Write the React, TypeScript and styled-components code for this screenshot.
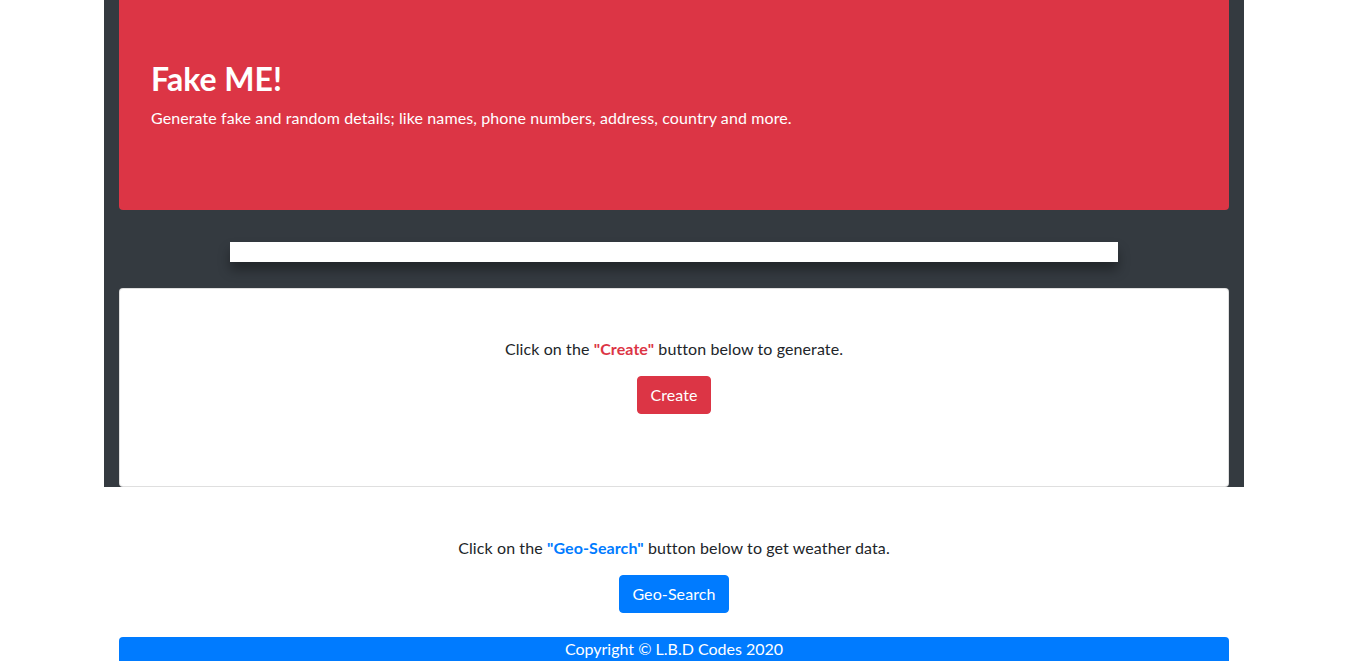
import React from "react";
import styled, { createGlobalStyle } from "styled-components";

const Global = createGlobalStyle`
  html, body { margin: 0; padding: 0; background: #fff; }
  body {
    padding-left: 3px;
    font-family: Lato, "Open Sans", "Liberation Sans", sans-serif;
    font-size: 16px;
    line-height: 1.5;
    letter-spacing: 0.1px;
    color: #212529;
  }
  * { box-sizing: border-box; }
`;

const Page = styled.div`
  width: 1140px;
  margin: 0 auto;
`;

const DarkSection = styled.section`
  background: #343a40;
  padding: 0 15px;
  height: 487px;
`;

const Jumbotron = styled.header`
  background: #dc3545;
  color: #fff;
  border-radius: 0 0 4px 4px;
  padding: 60px 32px 64px;
  margin-bottom: 32px;
`;

const Title = styled.h1`
  margin: 0 0 8px;
  font-size: 32px;
  font-weight: 700;
  line-height: 1.2;
  letter-spacing: 0;
`;

const Lead = styled.p`
  margin: 0 0 16px;
  font-size: 16px;
`;

const Bar = styled.div`
  width: 80%;
  height: 20px;
  margin: 0 auto 26px;
  background: #fff;
  box-shadow: 0 8px 12px rgba(0, 0, 0, 0.35);
`;

const Card = styled.div`
  background: #fff;
  border: 1px solid rgba(0, 0, 0, 0.125);
  border-radius: 4px;
  padding: 48px 20px 72px;
  text-align: center;
  height: 199px;
`;

const Prompt = styled.p`
  margin: 0 0 15px;
`;

const Strong = styled.strong<{ $color: string }>`
  color: ${(p) => p.$color};
  font-weight: 700;
`;

const Button = styled.button<{ $bg: string }>`
  font-family: inherit;
  font-size: 16px;
  line-height: 1.5;
  letter-spacing: inherit;
  color: #fff;
  background: ${(p) => p.$bg};
  border: 1px solid ${(p) => p.$bg};
  border-radius: 4px;
  padding: 6px 12px;
  cursor: pointer;
`;

const LowerSection = styled.section`
  padding: 49px 15px 24px;
  text-align: center;
`;

const Footer = styled.footer`
  margin: 0 15px;
  background: #007bff;
  color: #fff;
  text-align: center;
  border-radius: 4px 4px 0 0;
  height: 30px;
  line-height: 24px;
  letter-spacing: 0;
`;

export default function App() {
  return (
    <>
      <Global />
      <Page>
        <DarkSection>
          <Jumbotron>
            <Title>Fake ME!</Title>
            <Lead>
              Generate fake and random details; like names, phone numbers, address, country and more.
            </Lead>
          </Jumbotron>
          <Bar />
          <Card>
            <Prompt>
              Click on the <Strong $color="#dc3545">"Create"</Strong> button below to generate.
            </Prompt>
            <Button $bg="#dc3545">Create</Button>
          </Card>
        </DarkSection>
        <LowerSection>
          <Prompt>
            Click on the <Strong $color="#007bff">"Geo-Search"</Strong> button below to get weather data.
          </Prompt>
          <Button $bg="#007bff">Geo-Search</Button>
        </LowerSection>
        <Footer>Copyright © L.B.D Codes 2020</Footer>
      </Page>
    </>
  );
}
